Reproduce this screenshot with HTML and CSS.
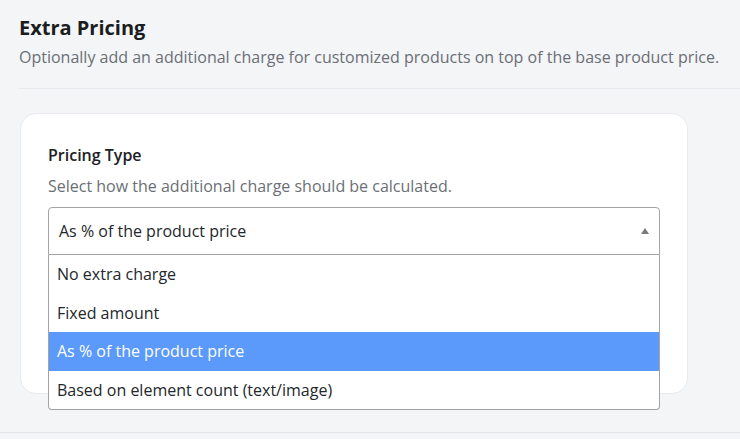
FILE: index.html
```html
<!DOCTYPE html>
<html lang="en">
<head>
    <meta charset="UTF-8">
    <title>Extra Pricing</title>

    <link rel="stylesheet" href="styles.css">
</head>
<body>

<section class="settings">
    <div class="settings-head">
        <h2 class="settings-title">Extra Pricing</h2>
        <p class="settings-desc">Optionally add an additional charge for customized products on top of the base product price.</p>
    </div>

    <div class="card">
        <label class="field-label" for="pricing-type">Pricing Type</label>
        <p class="field-help">Select how the additional charge should be calculated.</p>

        <div class="select-wrap">
            <div class="select-box" id="pricing-type">
                <span>As % of the product price</span>
                <span class="select-arrow"></span>
            </div>
            <ul class="select-list">
                <li>No extra charge</li>
                <li>Fixed amount</li>
                <li class="selected">As % of the product price</li>
                <li>Based on element count (text/image)</li>
            </ul>
        </div>
    </div>
</section>

</body>
</html>
```

FILE: styles.css
```css
body {
    margin: 0;
    background: #f4f5f7;
    font: 16px "Open Sans", sans-serif;
    color: #1f2328;
}

.settings {
    height: 433px;
    border-bottom: 1px solid #e3e5e8;
    box-sizing: border-box;
}

.settings-head {
    margin-left: 19px;
    padding-top: 14px;
    padding-bottom: 19px;
    border-bottom: 1px solid #e8eaed;
}

.settings-title {
    margin: 0;
    font-size: 20px;
    font-weight: 700;
    line-height: 28px;
    color: #1b1d20;
}

.settings-desc {
    margin: 3px 0 0;
    font-size: 16px;
    line-height: 24px;
    color: #6b6f76;
}

.card {
    margin: 24px 0 0 20px;
    width: 668px;
    height: 281px;
    box-sizing: border-box;
    background: #fff;
    border: 1px solid #e8eaed;
    border-radius: 16px;
    padding: 29px 27px;
}

.field-label {
    display: block;
    font-weight: 600;
    line-height: 24px;
    color: #202124;
}

.field-help {
    margin: 8px 0 10px;
    font-size: 16px;
    line-height: 22px;
    color: #6b6f76;
}

.select-wrap {
    position: relative;
}

.select-box {
    height: 48px;
    box-sizing: border-box;
    border: 1px solid #a3a3a3;
    border-radius: 4px 4px 0 0;
    display: flex;
    align-items: center;
    justify-content: space-between;
    padding: 0 10px 0 10px;
    color: #24272b;
}

.select-arrow {
    width: 0;
    height: 0;
    border-left: 4px solid transparent;
    border-right: 4px solid transparent;
    border-bottom: 6px solid #7a7a7a;
}

.select-list {
    position: absolute;
    top: 48px;
    left: 0;
    right: 0;
    margin: 0;
    padding: 0;
    list-style: none;
    background: #fff;
    border: 1px solid #a3a3a3;
    border-top: 0;
    border-radius: 0 0 4px 4px;
}

.select-list li {
    height: 38.5px;
    line-height: 38.5px;
    padding: 0 8px;
    color: #24272b;
}

.select-list li.selected {
    background: #5b99fb;
    color: #fff;
}
```
